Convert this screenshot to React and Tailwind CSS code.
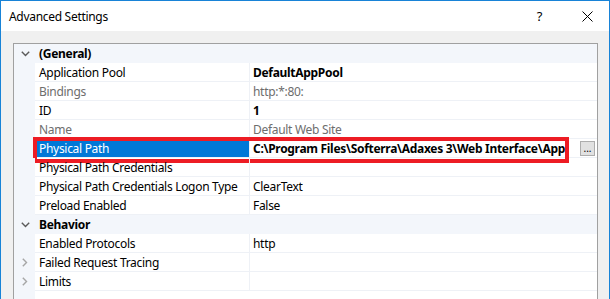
import React from 'react';

const rows = [
  { type: 'cat', label: '(General)' },
  { label: 'Application Pool', value: 'DefaultAppPool', bold: true },
  { label: 'Bindings', value: 'http:*:80:', disabled: true },
  { label: 'ID', value: '1', bold: true },
  { label: 'Name', value: 'Default Web Site', disabled: true },
  { label: 'Physical Path', value: 'C:\\Program Files\\Softerra\\Adaxes 3\\Web Interface\\App', bold: true, selected: true },
  { label: 'Physical Path Credentials', value: '' },
  { label: 'Physical Path Credentials Logon Type', value: 'ClearText' },
  { label: 'Preload Enabled', value: 'False' },
  { type: 'cat', label: 'Behavior' },
  { label: 'Enabled Protocols', value: 'http' },
  { label: 'Failed Request Tracing', value: '', collapsed: true },
  { label: 'Limits', value: '', collapsed: true },
];

const ChevronDown = () => (
  <svg width="9" height="6" viewBox="0 0 9 6">
    <polyline points="0.8,0.8 4.5,4.5 8.2,0.8" fill="none" stroke="#5a5a5a" strokeWidth="1.4" />
  </svg>
);

const ChevronRight = () => (
  <svg width="6" height="9" viewBox="0 0 6 9">
    <polyline points="0.8,0.8 4.5,4.5 0.8,8.2" fill="none" stroke="#a6a6a6" strokeWidth="1.4" />
  </svg>
);

const Row = ({ row }) => {
  if (row.type === 'cat') {
    return (
      <div className="flex h-[19px] bg-[#f3f6fb] items-center">
        <div className="w-[21px] flex items-center justify-center pl-[1px]">
          <ChevronDown />
        </div>
        <div className="pl-[4px] pt-[1px] font-bold text-black">{row.label}</div>
      </div>
    );
  }

  return (
    <div className="relative flex h-[19px]">
      <div className="w-[21px] bg-[#f3f6fb] flex items-center justify-center">
        {row.collapsed && <ChevronRight />}
      </div>
      <div
        className={`w-[214px] pl-[4px] pt-[1px] flex items-center border-b border-[#eef1f6] ${
          row.selected ? 'bg-[#0078d7] text-white' : row.disabled ? 'text-[#6d6d6d]' : 'text-black'
        }`}
      >
        <span className="whitespace-nowrap">{row.label}</span>
      </div>
      <div className="w-[1px] bg-[#eef1f6]" />
      <div
        className={`flex-1 min-w-0 pl-[3px] pt-[1px] flex items-center border-b border-[#eef1f6] ${
          row.bold ? 'font-bold text-black' : row.disabled ? 'text-[#6d6d6d]' : 'text-black'
        }`}
      >
        <span className="whitespace-nowrap">{row.value}</span>
        {row.selected && (
          <div className="ml-auto mr-[2px] w-[15px] h-[15px] bg-[#e1e1e1] border border-[#adadad] flex items-end justify-center text-[10px] leading-[10px] font-normal text-black pb-[2px] tracking-normal">
            ...
          </div>
        )}
      </div>
      {row.selected && (
        <div className="absolute left-[19px] top-[-2px] w-[536px] h-[26px] border-[4px] border-[#ed1c24] pointer-events-none" />
      )}
    </div>
  );
};

const App = () => {
  return (
    <div
      className="w-[610px] h-[299px] overflow-hidden border border-b-0 border-[#1883d7] bg-[#f0f0f0] flex flex-col text-[12px] leading-[16px] tracking-[-0.3px]"
      style={{ fontFamily: '"Noto Sans", "Open Sans", sans-serif' }}
    >
      <div className="h-[30px] bg-white flex items-center shrink-0">
        <div className="pl-[8px] pt-[1px] text-black text-[12px]">Advanced Settings</div>
        <div className="ml-auto flex items-center">
          <span className="text-[13px] text-black mr-[40px]">?</span>
          <svg width="11" height="11" viewBox="0 0 11 11" className="mr-[16px]">
            <line x1="0.5" y1="0.5" x2="10.5" y2="10.5" stroke="#000" strokeWidth="1" />
            <line x1="10.5" y1="0.5" x2="0.5" y2="10.5" stroke="#000" strokeWidth="1" />
          </svg>
        </div>
      </div>
      <div className="flex-1 pl-[12px] pr-[11px] pt-[12px]">
        <div className="h-full bg-white border border-b-0 border-[#a0a0a0] relative">
          {rows.map((row, i) => (
            <Row key={i} row={row} />
          ))}
          <div className="absolute left-0 top-[247px] bottom-0 w-[21px] bg-[#f3f6fb]" />
        </div>
      </div>
    </div>
  );
};

export default App;
